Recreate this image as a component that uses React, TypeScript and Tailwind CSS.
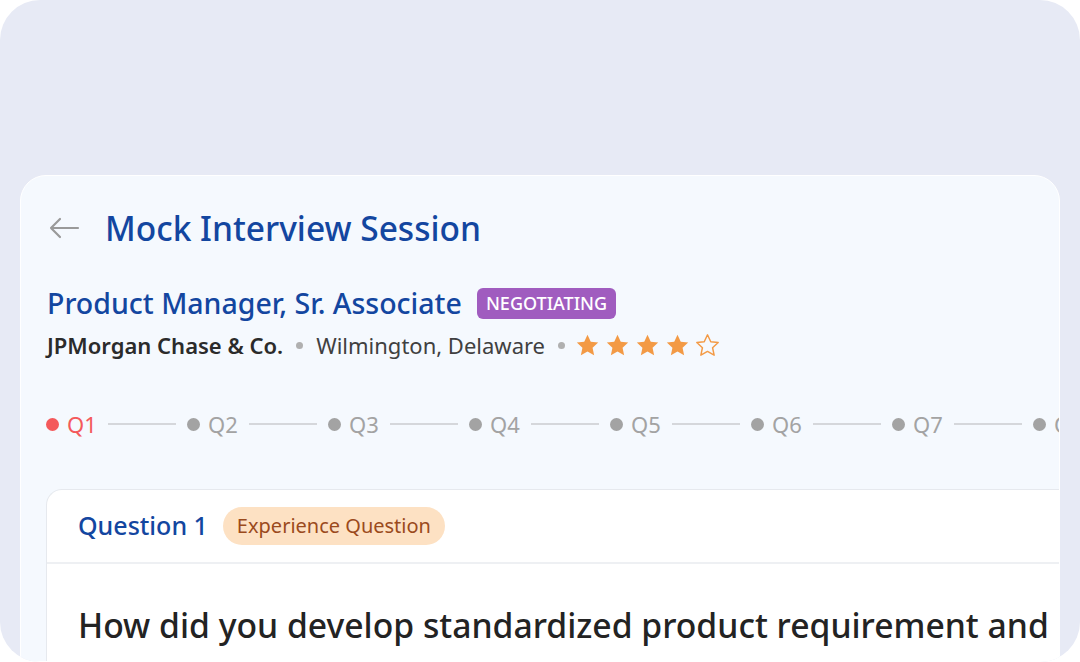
import { FC } from "react";

const font = { fontFamily: '"Noto Sans", "Open Sans", sans-serif' };

const Star: FC<{ filled: boolean }> = ({ filled }) => (
  <svg width="27" height="27" viewBox="0 0 24 24">
    <path
      d="M12 2.5l2.9 6.2 6.6.7-5 4.6 1.4 6.6L12 17.3l-5.9 3.3 1.4-6.6-5-4.6 6.6-.7z"
      fill={filled ? "#f39a45" : "none"}
      stroke="#f39a45"
      strokeWidth={filled ? 0 : 1.3}
      strokeLinejoin="round"
    />
  </svg>
);

const steps = ["Q1", "Q2", "Q3", "Q4", "Q5", "Q6", "Q7", "Q8"];

const App: FC = () => {
  return (
    <div className="w-[1080px] h-[662px] bg-white" style={font}>
      <div className="w-full h-full rounded-[40px] bg-[#e7eaf5] overflow-hidden flex flex-col pt-[175px] pl-[20px] pr-[20px]">
        <div className="flex-1 rounded-t-[26px] bg-[#f5f9fe] border border-white overflow-hidden flex flex-col">
          {/* header */}
          <div className="flex items-center gap-[25px] pl-[27px] pt-[30px]">
            <svg width="32" height="24" viewBox="0 0 32 24" fill="none" stroke="#9a9a9a" strokeWidth="2.2" strokeLinecap="round" strokeLinejoin="round">
              <path d="M30 12H3M12 3L3 12l9 9" />
            </svg>
            <h1 className="text-[33.5px] leading-[44px] font-medium text-[#1346a0] whitespace-nowrap">Mock Interview Session</h1>
          </div>

          <div className="pl-[26px] mt-[34px]">
            <div className="flex items-center gap-[15px]">
              <span className="text-[28.5px] leading-[38px] font-medium text-[#1346a0] whitespace-nowrap">Product Manager, Sr. Associate</span>
              <span className="bg-[#a05cbf] text-white text-[18px] leading-[31px] px-[9px] rounded-[6px] font-medium">NEGOTIATING</span>
            </div>
            <div className="flex items-center mt-[8px] text-[22px] leading-[30px] whitespace-nowrap">
              <span className="font-semibold text-[#2b2b2b]">JPMorgan Chase &amp; Co.</span>
              <span className="w-[7px] h-[7px] rounded-full bg-[#b0b0b0] mx-[13px]" />
              <span className="text-[#404040]">Wilmington, Delaware</span>
              <span className="w-[7px] h-[7px] rounded-full bg-[#b0b0b0] ml-[13px] mr-[9px]" />
              <div className="flex items-center gap-[3px]">
                {[1, 2, 3, 4, 5].map((i) => (
                  <Star key={i} filled={i <= 4} />
                ))}
              </div>
            </div>
          </div>

          {/* stepper */}
          <div className="flex items-center pl-[25px] mt-[49px] whitespace-nowrap">
            {steps.map((s, i) => (
              <div key={s} className="flex items-center shrink-0">
                <span className={`w-[13px] h-[13px] rounded-full ${i === 0 ? "bg-[#f4595b]" : "bg-[#a3a3a3]"}`} />
                <span className={`ml-[8px] text-[22px] leading-[30px] w-[30px] ${i === 0 ? "text-[#f4595b]" : "text-[#a3a3a3]"}`}>{s}</span>
                <span className="mx-[11px] w-[68px] h-[2px] bg-[#d5d7db]" />
              </div>
            ))}
          </div>

          {/* question panel */}
          <div className="mt-[50px] ml-[25px] w-[1040px] flex-1 bg-white rounded-tl-[16px] border-t border-l border-[#e6e9ee]">
            <div className="flex items-center gap-[15px] pl-[31px] h-[74px] border-b-2 border-[#eef0f3]">
              <span className="text-[25px] font-medium text-[#1346a0]">Question 1</span>
              <span className="bg-[#fde1c3] text-[#9b4a1c] text-[20px] leading-[38px] px-[14px] rounded-full">Experience Question</span>
            </div>
            <div className="pl-[31px] pt-[39px] text-[33.7px] leading-[44px] font-medium text-[#232323] whitespace-nowrap">
              How did you develop standardized product requirement and
            </div>
          </div>
        </div>
      </div>
    </div>
  );
};

export default App;
